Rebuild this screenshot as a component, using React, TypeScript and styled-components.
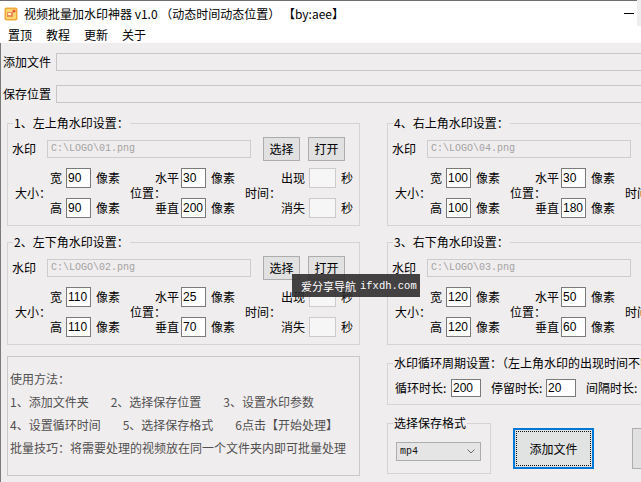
import React from "react";
import styled, { createGlobalStyle } from "styled-components";

const GlobalStyle = createGlobalStyle`
  html, body {
    margin: 0;
    padding: 0;
    overflow: hidden;
    background: #f0edee;
  }
  body {
    font-family: "Noto Sans CJK SC", "Noto Sans", sans-serif;
    font-size: 12px;
    color: #000;
  }
`;

const Window = styled.div`
  position: relative;
  width: 760px;
  height: 482px;
  background: #f0edee;
  overflow: hidden;
`;

const TitleBar = styled.div`
  height: 25px;
  border-top: 1px solid #6e6e6e;
  background: #fff;
  display: flex;
  align-items: center;
  padding-left: 4px;
  width: 633px;
`;

const TitleText = styled.span`
  margin-left: 6px;
  font-size: 12px;
  line-height: 14px;
  white-space: pre;
  flex: 1;
`;

const MinButton = styled.span`
  width: 10px;
  height: 0;
  border-top: 1px solid #000;
  margin-right: 3px;
`;

const MenuBar = styled.div`
  height: 17px;
  background: #fff;
  display: flex;
  align-items: center;
  padding-left: 1px;
`;

const MenuItem = styled.span`
  padding: 0 7px;
  font-size: 12px;
  line-height: 14px;
`;

const Body = styled.div`
  border-left: 1px solid #7a7a7a;
  padding-top: 10px;
  height: 439px;
  box-sizing: border-box;
`;

const FileRow = styled.div`
  display: flex;
  align-items: center;
  height: 18px;
  padding-left: 2px;
  & + & {
    margin-top: 14px;
  }
`;

const FileLabel = styled.span`
  width: 53px;
  font-size: 12px;
  line-height: 14px;
  white-space: nowrap;
`;

const FileInput = styled.div`
  flex: 1;
  height: 18px;
  box-sizing: border-box;
  border: 1px solid #c9c6c8;
`;

const Columns = styled.div`
  display: grid;
  grid-template-columns: 353px 353px;
  column-gap: 27px;
  padding-left: 6px;
  margin-top: 13px;
`;

const Column = styled.div`
  display: flex;
  flex-direction: column;
`;

const Group = styled.fieldset<{ $pad?: string; $gap?: number; $width?: number }>`
  margin: ${(p) => p.$gap ?? 0}px 0 0 0;
  padding: ${(p) => p.$pad ?? "7px 0 7px 0"};
  min-width: 0;
  width: ${(p) => (p.$width ? `${p.$width}px` : "auto")};
  box-sizing: border-box;
  border: 1px solid #d6d3d5;
  border-radius: 0;
`;

const GroupTitle = styled.legend`
  margin-left: 5px;
  padding: 0 1px;
  font-size: 12px;
  line-height: 14px;
  white-space: nowrap;
`;

const WmRow = styled.div`
  display: flex;
  align-items: center;
  height: 24px;
  padding-left: 4px;
`;

const WmLabel = styled.span`
  width: 35px;
  font-size: 12px;
  line-height: 14px;
`;

const PathBox = styled.div`
  width: 204px;
  height: 18px;
  box-sizing: border-box;
  border: 1px solid #cfcccf;
  padding-left: 3px;
  font-family: "Liberation Mono", monospace;
  font-size: 10px;
  line-height: 16px;
  color: #a3a3a3;
`;

const SmallButton = styled.button<{ $gap: number }>`
  width: 37px;
  height: 24px;
  margin-left: ${(p) => p.$gap}px;
  padding: 0;
  background: #e1e1e1;
  border: 1px solid #adadad;
  border-radius: 0;
  font-family: "Noto Sans CJK SC", sans-serif;
  font-size: 12px;
  line-height: 14px;
  color: #000;
`;

const SettingsGrid = styled.div`
  display: grid;
  grid-template-columns: 35px 16px 25px 39px 25px 26px 25px 39px 36px 28px 27px auto;
  grid-template-rows: 20px 20px;
  row-gap: 10px;
  align-items: center;
  margin-top: 7px;
  padding-left: 7px;
  font-size: 12px;
  line-height: 14px;
`;

const SectionLabel = styled.span`
  grid-row: span 2;
  white-space: nowrap;
`;

const SubLabel = styled.span`
  white-space: nowrap;
`;

const NumBox = styled.div<{ $w?: number; $h?: number }>`
  width: ${(p) => p.$w ?? 25}px;
  height: ${(p) => p.$h ?? 20}px;
  box-sizing: border-box;
  background: #fff;
  border: 1px solid #7a7a7a;
  padding-left: 1px;
  font-family: "Liberation Sans", Arial, sans-serif;
  font-size: 12px;
  line-height: ${(p) => (p.$h ?? 20) - 2}px;
`;

const TimeBox = styled.div`
  width: 27px;
  height: 20px;
  box-sizing: border-box;
  background: #f7f6f7;
  border: 1px solid #cdcacc;
`;

const Unit = styled.span`
  padding-left: 5px;
  white-space: nowrap;
`;

const UsageBox = styled.div`
  margin-top: 11px;
  height: 120px;
  box-sizing: border-box;
  border: 1px solid #cbc8ca;
  padding: 10px 2px 0;
  font-size: 12px;
  line-height: 23px;
  color: #505050;
`;

const UsageLine = styled.div`
  display: flex;
  gap: 22px;
  white-space: nowrap;
`;

const LoopRow = styled.div`
  display: flex;
  align-items: center;
  height: 18px;
  padding-left: 7px;
  font-size: 12px;
  line-height: 14px;
`;

const LoopLabel = styled.span<{ $w: number }>`
  width: ${(p) => p.$w}px;
  white-space: nowrap;
`;

const LoopGap = styled.span`
  width: 10px;
`;

const BottomRow = styled.div`
  display: flex;
  align-items: flex-start;
  margin-top: 11px;
`;

const Combo = styled.div`
  margin-left: 8px;
  width: 85px;
  height: 19px;
  box-sizing: border-box;
  background: #e6e5e6;
  border: 1px solid #adadad;
  display: flex;
  align-items: center;
  justify-content: space-between;
  padding: 0 5px 0 3px;
  font-family: "Liberation Mono", monospace;
  font-size: 10px;
  color: #111;
`;

const PrimaryButton = styled.button`
  margin: 12px 0 0 22px;
  width: 81px;
  height: 41px;
  padding: 0;
  background: #e1e3e3;
  border: 2px solid #0078d7;
  border-radius: 0;
  outline: 1px dotted #111;
  outline-offset: -4px;
  font-family: "Noto Sans CJK SC", sans-serif;
  font-size: 12px;
  line-height: 14px;
  color: #000;
`;

const PlainButton = styled.button`
  margin: 12px 0 0 38px;
  width: 81px;
  height: 41px;
  padding: 0;
  background: #e1e1e1;
  border: 1px solid #adadad;
  border-radius: 0;
  font-family: "Noto Sans CJK SC", sans-serif;
  font-size: 12px;
  color: #000;
`;

const Watermark = styled.div`
  position: absolute;
  left: 292px;
  top: 274px;
  width: 128px;
  height: 23px;
  box-sizing: border-box;
  padding-left: 9px;
  background: rgba(48, 46, 47, 0.9);
  color: #fff;
  display: flex;
  align-items: center;
  font-size: 11px;
  white-space: nowrap;
  span {
    margin-left: 4px;
    font-family: "Liberation Mono", monospace;
    font-size: 10.5px;
  }
`;

const AppIcon = () => (
  <svg width="14" height="14" viewBox="0 0 14 14">
    <rect x="0.5" y="0.5" width="13" height="13" rx="2" fill="#f3a63a" />
    <rect x="2" y="2" width="10" height="10" rx="1" fill="#fcd870" />
    <rect x="3" y="5" width="6" height="5" fill="#f08a5a" />
    <circle cx="10" cy="4" r="1.6" fill="#e8523a" />
    <rect x="4" y="6" width="3" height="2" fill="#fff3c4" />
  </svg>
);

const Chevron = () => (
  <svg width="8" height="5" viewBox="0 0 8 5">
    <path d="M0.5 0.5 L4 4 L7.5 0.5" fill="none" stroke="#6a6a6a" strokeWidth="1" />
  </svg>
);

type WmProps = {
  title: string;
  path: string;
  w: number;
  h: number;
  x: number;
  y: number;
  gap?: number;
};

const WatermarkGroup = ({ title, path, w, h, x, y, gap }: WmProps) => (
  <Group $gap={gap}>
    <GroupTitle>{title}</GroupTitle>
    <WmRow>
      <WmLabel>水印</WmLabel>
      <PathBox>{path}</PathBox>
      <SmallButton $gap={12}>选择</SmallButton>
      <SmallButton $gap={8}>打开</SmallButton>
    </WmRow>
    <SettingsGrid>
      <SectionLabel>大小：</SectionLabel>
      <SubLabel>宽</SubLabel>
      <NumBox>{w}</NumBox>
      <Unit>像素</Unit>
      <SectionLabel>位置：</SectionLabel>
      <SubLabel>水平</SubLabel>
      <NumBox>{x}</NumBox>
      <Unit>像素</Unit>
      <SectionLabel>时间：</SectionLabel>
      <SubLabel>出现</SubLabel>
      <TimeBox />
      <Unit>秒</Unit>
      <SubLabel>高</SubLabel>
      <NumBox>{h}</NumBox>
      <Unit>像素</Unit>
      <SubLabel>垂直</SubLabel>
      <NumBox>{y}</NumBox>
      <Unit>像素</Unit>
      <SubLabel>消失</SubLabel>
      <TimeBox />
      <Unit>秒</Unit>
    </SettingsGrid>
  </Group>
);

const App = () => {
  return (
    <Window>
      <GlobalStyle />
      <TitleBar>
        <AppIcon />
        <TitleText>视频批量加水印神器 v1.0 （动态时间动态位置） 【by:aee】</TitleText>
        <MinButton />
      </TitleBar>
      <MenuBar>
        {["置顶", "教程", "更新", "关于"].map((m) => (
          <MenuItem key={m}>{m}</MenuItem>
        ))}
      </MenuBar>
      <Body>
        <FileRow>
          <FileLabel>添加文件</FileLabel>
          <FileInput />
        </FileRow>
        <FileRow>
          <FileLabel>保存位置</FileLabel>
          <FileInput />
        </FileRow>
        <Columns>
          <Column>
            <WatermarkGroup title="1、左上角水印设置：" path="C:\LOGO\01.png" w={90} h={90} x={30} y={200} />
            <WatermarkGroup title="2、左下角水印设置：" path="C:\LOGO\02.png" w={110} h={110} x={25} y={70} gap={9} />
            <UsageBox>
              <UsageLine>使用方法：</UsageLine>
              <UsageLine>
                <span>1、添加文件夹</span>
                <span>2、选择保存位置</span>
                <span>3、设置水印参数</span>
              </UsageLine>
              <UsageLine>
                <span>4、设置循环时间</span>
                <span>5、选择保存格式</span>
                <span>6点击【开始处理】</span>
              </UsageLine>
              <UsageLine>批量技巧：将需要处理的视频放在同一个文件夹内即可批量处理</UsageLine>
            </UsageBox>
          </Column>
          <Column>
            <WatermarkGroup title="4、右上角水印设置：" path="C:\LOGO\04.png" w={100} h={100} x={30} y={180} />
            <WatermarkGroup title="3、右下角水印设置：" path="C:\LOGO\03.png" w={120} h={120} x={50} y={60} gap={9} />
            <Group $gap={11} $pad="9px 0 7px 0">
              <GroupTitle>水印循环周期设置：（左上角水印的出现时间不能大于循环时长）</GroupTitle>
              <LoopRow>
                <LoopLabel $w={56}>循环时长:</LoopLabel>
                <NumBox $w={30} $h={18}>200</NumBox>
                <LoopGap />
                <LoopLabel $w={55}>停留时长:</LoopLabel>
                <NumBox $w={30} $h={18}>20</NumBox>
                <LoopGap />
                <LoopLabel $w={56}>间隔时长:</LoopLabel>
                <NumBox $w={30} $h={18}>180</NumBox>
              </LoopRow>
            </Group>
            <BottomRow>
              <Group $width={104} $pad="12px 0 12px 0">
                <GroupTitle>选择保存格式</GroupTitle>
                <Combo>
                  mp4
                  <Chevron />
                </Combo>
              </Group>
              <PrimaryButton>添加文件</PrimaryButton>
              <PlainButton>开始处理</PlainButton>
            </BottomRow>
          </Column>
        </Columns>
      </Body>
      <Watermark>
        爱分享导航<span>ifxdh.com</span>
      </Watermark>
    </Window>
  );
};

export default App;
